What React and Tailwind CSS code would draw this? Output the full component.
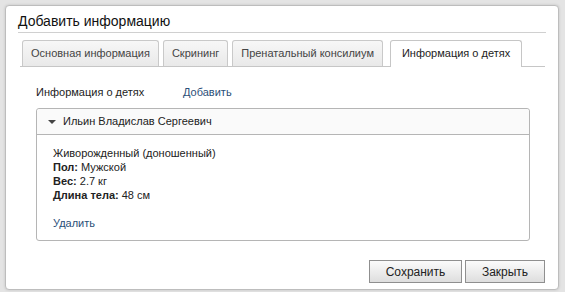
const tabs = ["Основная информация", "Скрининг", "Пренатальный консилиум", "Информация о детях"];

function Tabs() {
    return (
        <div className="flex items-end gap-[4px] border-b border-[#c6c6c6] pl-[2px] h-[34px]">
            {tabs.map((t, i) =>
                i === tabs.length - 1 ? (
                    <div
                        key={t}
                        className="shrink-0 whitespace-nowrap h-[27px] ml-[3px] px-[11px] flex items-center border border-b-0 border-[#c6c6c6] rounded-t-[3px] bg-white text-[#222] -mb-px pb-px"
                    >
                        {t}
                    </div>
                ) : (
                    <div
                        key={t}
                        className="shrink-0 whitespace-nowrap h-[26px] px-[8px] flex items-center border border-b-0 border-[#c9c9c9] rounded-t-[3px] bg-gradient-to-b from-[#f7f7f7] to-[#e9e9e9] text-[#444]"
                    >
                        {t}
                    </div>
                )
            )}
        </div>
    );
}

function ChildPanel() {
    return (
        <div className="ml-[18px] mr-[28px] mt-[9px] border border-[#b5b5b5] rounded-[3px]">
            <div className="h-[26px] flex items-center gap-[7px] pl-[11px] border-b border-[#b5b5b5] bg-[#fafafa] rounded-t-[3px] text-[#222]">
                <span className="w-0 h-0 border-l-[4px] border-r-[4px] border-t-[4px] border-l-transparent border-r-transparent border-t-[#444] mt-px" />
                Ильин Владислав Сергеевич
            </div>
            <div className="pl-[16px] pt-[11px] pb-[10px] leading-[14px] text-[#222]">
                <div>Живорожденный (доношенный)</div>
                <div>
                    <b>Пол:</b> Мужской
                </div>
                <div>
                    <b>Вес:</b> 2.7 кг
                </div>
                <div>
                    <b>Длина тела:</b> 48 см
                </div>
                <div className="mt-[14px] text-[#2b4f78]">Удалить</div>
            </div>
        </div>
    );
}

function Button({ children, w }) {
    return (
        <div
            className={`${w} h-[23px] flex items-center justify-center border border-[#8f8f8f] bg-gradient-to-b from-[#fbfbfb] to-[#dedede] text-[12px] text-[#222]`}
        >
            {children}
        </div>
    );
}

export default function App() {
    return (
        <div
            className="w-[565px] h-[292px] bg-[#e4e4e4] pt-[5px] pl-[5px] overflow-hidden text-[11px]"
            style={{ fontFamily: '"Liberation Sans", Arial, sans-serif' }}
        >
            <div className="w-[554px] h-[285px] bg-white border border-[#bdbdbd] rounded-[4px] shadow-[0_0_3px_rgba(0,0,0,0.15)] flex flex-col">
                <div className="mx-[12px] h-[27px] pt-[7px] text-[14px] leading-[16px] text-[#111] border-b border-[#d0d0d0]">
                    Добавить информацию
                </div>
                <div className="pl-[14px] pr-[13px]">
                    <Tabs />
                </div>
                <div className="flex pl-[30px] mt-[18px] leading-[14px] text-[#222]">
                    <span className="w-[147px]">Информация о детях</span>
                    <span className="text-[#2b4f78]">Добавить</span>
                </div>
                <div className="pl-[12px]">
                    <ChildPanel />
                </div>
                <div className="flex justify-end gap-[3px] pr-[13px] mt-[19px]">
                    <Button w="w-[93px]">Сохранить</Button>
                    <Button w="w-[80px]">Закрыть</Button>
                </div>
            </div>
        </div>
    );
}
